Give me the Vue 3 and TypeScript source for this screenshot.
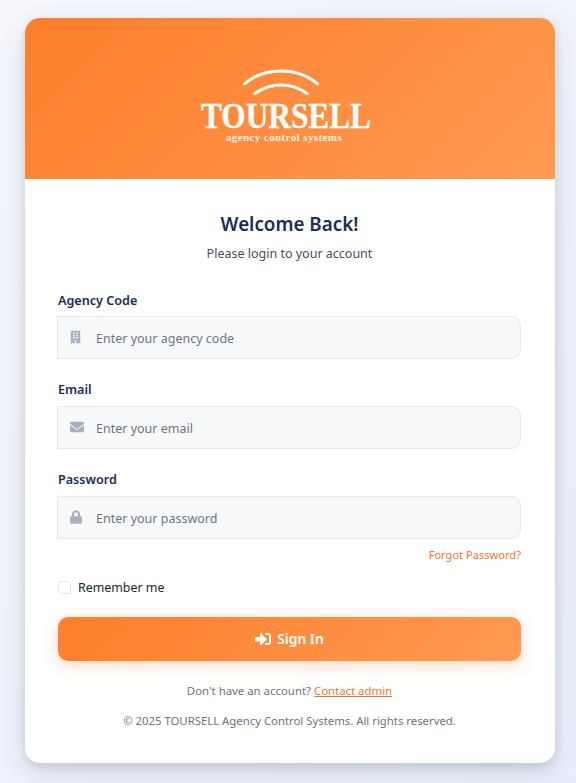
<template>
  <div class="page">
    <div class="card">
      <header class="card-header">
        <div class="logo">
          <svg class="logo-arcs" width="80" height="28" viewBox="0 0 80 28" fill="none">
            <path d="M2.500 15 C 22 -2.500, 56 -2.500, 75.500 15" />
            <path d="M13 24.500 C 29 13, 49 13, 65 24.500" />
          </svg>
          <div class="logo-name">TOURSELL</div>
          <div class="logo-tag">agency control systems</div>
        </div>
      </header>

      <div class="card-body">
        <h1 class="title">Welcome Back!</h1>
        <p class="subtitle">Please login to your account</p>

        <form class="login-form" @submit.prevent>
          <div v-for="field in fields" :key="field.label" class="form-group">
            <label class="form-label">{{ field.label }}</label>
            <div class="input-wrap">
              <svg class="input-icon" :viewBox="field.viewBox" :style="{ width: field.iconWidth + 'px' }">
                <path :d="field.icon" />
              </svg>
              <input class="form-input" :type="field.type" :placeholder="field.placeholder" />
            </div>
          </div>

          <div class="forgot-row"><a href="#" class="forgot-link">Forgot Password?</a></div>

          <label class="remember">
            <input type="checkbox" class="remember-box" />
            <span>Remember me</span>
          </label>

          <button type="submit" class="submit-btn">
            <svg class="submit-icon" viewBox="0 0 512 512"><path :d="signInPath" /></svg>
            Sign In
          </button>
        </form>

        <p class="contact">Don't have an account? <a href="#">Contact admin</a></p>
        <p class="copyright">© 2025 TOURSELL Agency Control Systems. All rights reserved.</p>
      </div>
    </div>
  </div>
</template>

<script setup lang="ts">
interface Field {
  label: string
  type: string
  placeholder: string
  viewBox: string
  iconWidth: number
  icon: string
}

const fields: Field[] = [
  {
    label: 'Agency Code',
    type: 'text',
    placeholder: 'Enter your agency code',
    viewBox: '0 0 448 512',
    iconWidth: 11,
    icon: 'M436 480h-20V24c0-13.255-10.745-24-24-24H56C42.745 0 32 10.745 32 24v456H12c-6.627 0-12 5.373-12 12v20h448v-20c0-6.627-5.373-12-12-12zM128 76c0-6.627 5.373-12 12-12h40c6.627 0 12 5.373 12 12v40c0 6.627-5.373 12-12 12h-40c-6.627 0-12-5.373-12-12V76zm0 96c0-6.627 5.373-12 12-12h40c6.627 0 12 5.373 12 12v40c0 6.627-5.373 12-12 12h-40c-6.627 0-12-5.373-12-12v-40zm52 148h-40c-6.627 0-12-5.373-12-12v-40c0-6.627 5.373-12 12-12h40c6.627 0 12 5.373 12 12v40c0 6.627-5.373 12-12 12zm76 160h-64v-84c0-6.627 5.373-12 12-12h40c6.627 0 12 5.373 12 12v84zm64-172c0 6.627-5.373 12-12 12h-40c-6.627 0-12-5.373-12-12v-40c0-6.627 5.373-12 12-12h40c6.627 0 12 5.373 12 12v40zm0-96c0 6.627-5.373 12-12 12h-40c-6.627 0-12-5.373-12-12v-40c0-6.627 5.373-12 12-12h40c6.627 0 12 5.373 12 12v40zm0-96c0 6.627-5.373 12-12 12h-40c-6.627 0-12-5.373-12-12V76c0-6.627 5.373-12 12-12h40c6.627 0 12 5.373 12 12v40z',
  },
  {
    label: 'Email',
    type: 'email',
    placeholder: 'Enter your email',
    viewBox: '0 0 512 512',
    iconWidth: 14,
    icon: 'M502.3 190.8c3.9-3.1 9.7-.2 9.7 4.7V400c0 26.5-21.5 48-48 48H48c-26.5 0-48-21.5-48-48V195.6c0-5 5.7-7.8 9.7-4.7 22.4 17.4 52.1 39.5 154.1 113.6 21.1 15.4 56.7 47.8 92.2 47.6 35.7.3 72-32.8 92.3-47.6 102-74.1 131.6-96.3 154-113.7zM256 320c23.2.4 56.6-29.2 73.4-41.4 132.7-96.3 142.8-104.7 173.4-128.7 5.8-4.5 9.2-11.5 9.2-18.9v-19c0-26.5-21.5-48-48-48H48C21.5 64 0 85.5 0 112v19c0 7.4 3.4 14.3 9.2 18.9 30.6 23.9 40.7 32.4 173.4 128.7 16.8 12.2 50.2 41.8 73.4 41.4z',
  },
  {
    label: 'Password',
    type: 'password',
    placeholder: 'Enter your password',
    viewBox: '0 0 448 512',
    iconWidth: 12,
    icon: 'M400 224h-24v-72C376 68.2 307.8 0 224 0S72 68.2 72 152v72H48c-26.5 0-48 21.5-48 48v192c0 26.5 21.5 48 48 48h352c26.5 0 48-21.5 48-48V272c0-26.5-21.5-48-48-48zm-104 0H152v-72c0-39.7 32.3-72 72-72s72 32.3 72 72v72z',
  },
]

const signInPath =
  'M416 448h-84c-6.6 0-12-5.4-12-12v-40c0-6.6 5.4-12 12-12h84c17.7 0 32-14.3 32-32V160c0-17.7-14.3-32-32-32h-84c-6.6 0-12-5.4-12-12V76c0-6.6 5.4-12 12-12h84c53 0 96 43 96 96v192c0 53-43 96-96 96zm-47-201L201 79c-15-15-41-4.5-41 17v96H24c-13.3 0-24 10.7-24 24v96c0 13.3 10.7 24 24 24h136v96c0 21.5 26 32 41 17l168-168c9.3-9.4 9.3-24.6 0-34z'
</script>

<style>
html,
body {
  margin: 0;
  height: 100%;
}
</style>

<style scoped>
.page {
  box-sizing: border-box;
  width: 576px;
  height: 783px;
  padding: 18px 21px 20px 25px;
  background: linear-gradient(135deg, #f5f7fd 0%, #e8eefb 100%);
  font-family: 'Noto Sans', 'Open Sans', sans-serif;
  overflow: hidden;
}

.card {
  width: 530px;
  height: 745px;
  background: #fff;
  border-radius: 15px;
  box-shadow: 0 10px 30px rgba(0, 0, 0, 0.1), 0 4px 10px rgba(30, 50, 90, 0.12);
  overflow: hidden;
}

.card-header {
  height: 161px;
  display: flex;
  align-items: center;
  justify-content: center;
  background: linear-gradient(135deg, #ff7e2b 0%, #ff9a52 100%);
}

.logo {
  display: flex;
  flex-direction: column;
  align-items: center;
  color: #fff;
  margin: 15px 0 0 -9px;
}

.logo-arcs {
  display: block;
  margin: 0 7px 6px 0;
}

.logo-arcs path {
  stroke: #fff;
  stroke-width: 3;
  stroke-linecap: round;
}

.logo-name {
  font-family: 'Liberation Serif', serif;
  font-weight: 700;
  font-size: 35px;
  line-height: 27px;
  transform: scaleX(0.895);
  -webkit-text-stroke: 0.3px #fff;
}

.logo-tag {
  font-family: 'Liberation Serif', serif;
  font-weight: 700;
  font-size: 11px;
  line-height: 12px;
  letter-spacing: 0.4px;
  margin: 1px 0 0 -3px;
  color: #ffeee0;
}

.card-body {
  padding: 32px 34px 0 33px;
}

.title {
  margin: 0;
  text-align: center;
  font-size: 18.8px;
  line-height: 26px;
  font-weight: 600;
  color: #1a2d5a;
}

.subtitle {
  margin: 8px 0 0;
  text-align: center;
  font-size: 12.5px;
  line-height: 18px;
  color: #495057;
}

.login-form {
  margin-top: 28.6px;
}

.form-group {
  margin-bottom: 22.4px;
}

.form-group:nth-of-type(3) {
  margin-bottom: 0;
}

.form-label {
  display: block;
  margin-bottom: 6.4px;
  font-size: 12.6px;
  line-height: 18px;
  font-weight: 600;
  color: #1a2d5a;
}

.input-wrap {
  position: relative;
  margin-left: -1px;
}

.input-icon {
  position: absolute;
  left: 13px;
  top: 50%;
  height: 14px;
  transform: translateY(-50%);
  fill: #a9b1bf;
}

.form-input {
  box-sizing: border-box;
  display: block;
  width: 464px;
  height: 43px;
  padding: 3px 12px 0 38px;
  background: #f8f9fb;
  border: 1.5px solid #e5e9f0;
  border-radius: 0 10px 10px 0;
  font-family: inherit;
  font-size: 12.5px;
  color: #212529;
  outline: none;
}

.form-input::placeholder {
  color: #6c757d;
  opacity: 1;
}

.forgot-row {
  margin-top: 8.4px;
  text-align: right;
  font-size: 11.1px;
  line-height: 16px;
}

.forgot-link {
  color: #ff6f2b;
  text-decoration: none;
}

.remember {
  display: flex;
  align-items: center;
  gap: 7px;
  margin-top: 16px;
  font-size: 12.4px;
  line-height: 18px;
  color: #212529;
}

.remember-box {
  appearance: none;
  box-sizing: border-box;
  width: 13px;
  height: 13px;
  margin: 0;
  background: #fff;
  border: 1.5px solid #e2e5ec;
  border-radius: 4px;
}

.submit-btn {
  display: flex;
  align-items: center;
  justify-content: center;
  gap: 6px;
  width: 463px;
  height: 44px;
  margin-top: 20px;
  border: none;
  border-radius: 10px;
  background: linear-gradient(135deg, #ff7e2b 0%, #ff9a52 100%);
  box-shadow: 0 4px 15px rgba(255, 126, 43, 0.3);
  color: #fff;
  font-family: inherit;
  font-size: 13.8px;
  font-weight: 600;
}

.submit-icon {
  width: 16px;
  height: 16px;
  fill: #fff;
}

.contact {
  margin: 22px 0 0;
  text-align: center;
  font-size: 11.4px;
  line-height: 16px;
  color: #6c757d;
}

.contact a {
  color: #ff6f2b;
}

.copyright {
  margin: 14px 0 0;
  text-align: center;
  font-size: 11.35px;
  line-height: 16px;
  color: #6c757d;
}
</style>
